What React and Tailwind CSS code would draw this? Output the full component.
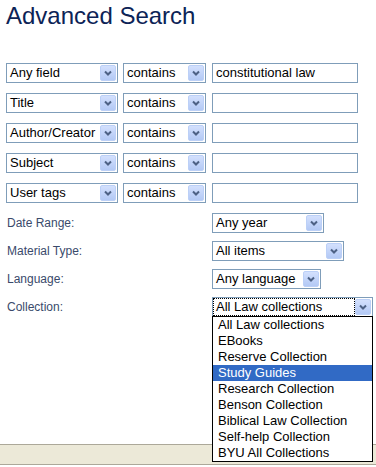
import React from 'react';

const font = { fontFamily: '"Liberation Sans", Arial, sans-serif' };

function Arrow() {
  return (
    <div className="w-[16px] h-[16px] mr-[1px] rounded-[2px] border border-[#bcd0f7] bg-gradient-to-b from-[#d3e0fd] to-[#b3c9f5] flex items-center justify-center">
      <svg width="8" height="6" viewBox="0 0 8 6">
        <path d="M1 1.5 L4 4.5 L7 1.5" fill="none" stroke="#4d6185" strokeWidth="2" />
      </svg>
    </div>
  );
}

function Select({ width, text, focus }) {
  return (
    <div
      className={`${width} h-[20px] shrink-0 border border-[#7f9db9] bg-white flex items-center`}
    >
      <div className="flex-1 h-full flex items-center px-[1px] min-w-0">
        <span
          className={`flex-1 h-[16px] flex items-center pl-[2px] text-[13px] text-black whitespace-nowrap overflow-hidden ${
            focus ? 'outline outline-1 outline-dotted outline-black' : ''
          }`}
        >
          {text}
        </span>
      </div>
      <Arrow />
    </div>
  );
}

function TextBox({ value }) {
  return (
    <div className="w-[146px] h-[20px] border border-[#7f9db9] bg-white flex items-center pl-[3px] text-[13px] text-black">
      {value}
    </div>
  );
}

const fields = [
  { field: 'Any field', value: 'constitutional law' },
  { field: 'Title', value: '' },
  { field: 'Author/Creator', value: '' },
  { field: 'Subject', value: '' },
  { field: 'User tags', value: '' },
];

const collections = [
  'All Law collections',
  'EBooks',
  'Reserve Collection',
  'Study Guides',
  'Research Collection',
  'Benson Collection',
  'Biblical Law Collection',
  'Self-help Collection',
  'BYU All Collections',
];

function LabelRow({ label, children }) {
  return (
    <div className="flex items-center">
      <div className="w-[206px] pl-[1px] text-[12px] text-[#3a4a6b]">{label}</div>
      {children}
    </div>
  );
}

export default function App() {
  return (
    <div className="relative w-[376px] h-[467px] bg-white flex flex-col overflow-hidden" style={font}>
      <div className="pl-[6px]">
        <h1 className="pt-[4px] text-[24px] leading-[24px] text-[#0c2356]">Advanced Search</h1>

        <div className="mt-[35px] flex flex-col gap-[10px]">
          {fields.map((r) => (
            <div key={r.field} className="flex items-center">
              <Select width="w-[112px]" text={r.field} />
              <div className="w-[5px]" />
              <Select width="w-[83px]" text="contains" />
              <div className="w-[6px]" />
              <TextBox value={r.value} />
            </div>
          ))}
        </div>

        <div className="mt-[10px] flex flex-col gap-[8px]">
          <LabelRow label="Date Range:">
            <Select width="w-[112px]" text="Any year" />
          </LabelRow>
          <LabelRow label="Material Type:">
            <Select width="w-[132px]" text="All items" />
          </LabelRow>
          <LabelRow label="Language:">
            <Select width="w-[109px]" text="Any language" />
          </LabelRow>
          <LabelRow label="Collection:">
            <Select width="w-[161px]" text="All Law collections" focus />
          </LabelRow>
        </div>
      </div>

      <div className="mt-auto mb-[2px] h-[21px] border-t border-b border-[#aca899] bg-[#ece9d8]" />

      <div className="absolute left-[212px] top-[316px] w-[161px] border border-black bg-white">
        {collections.map((c) => (
          <div
            key={c}
            className={`h-[16px] leading-[16px] pl-[5px] text-[13px] whitespace-nowrap ${
              c === 'Study Guides' ? 'bg-[#316ac5] text-white' : 'text-black'
            }`}
          >
            {c}
          </div>
        ))}
      </div>
    </div>
  );
}
